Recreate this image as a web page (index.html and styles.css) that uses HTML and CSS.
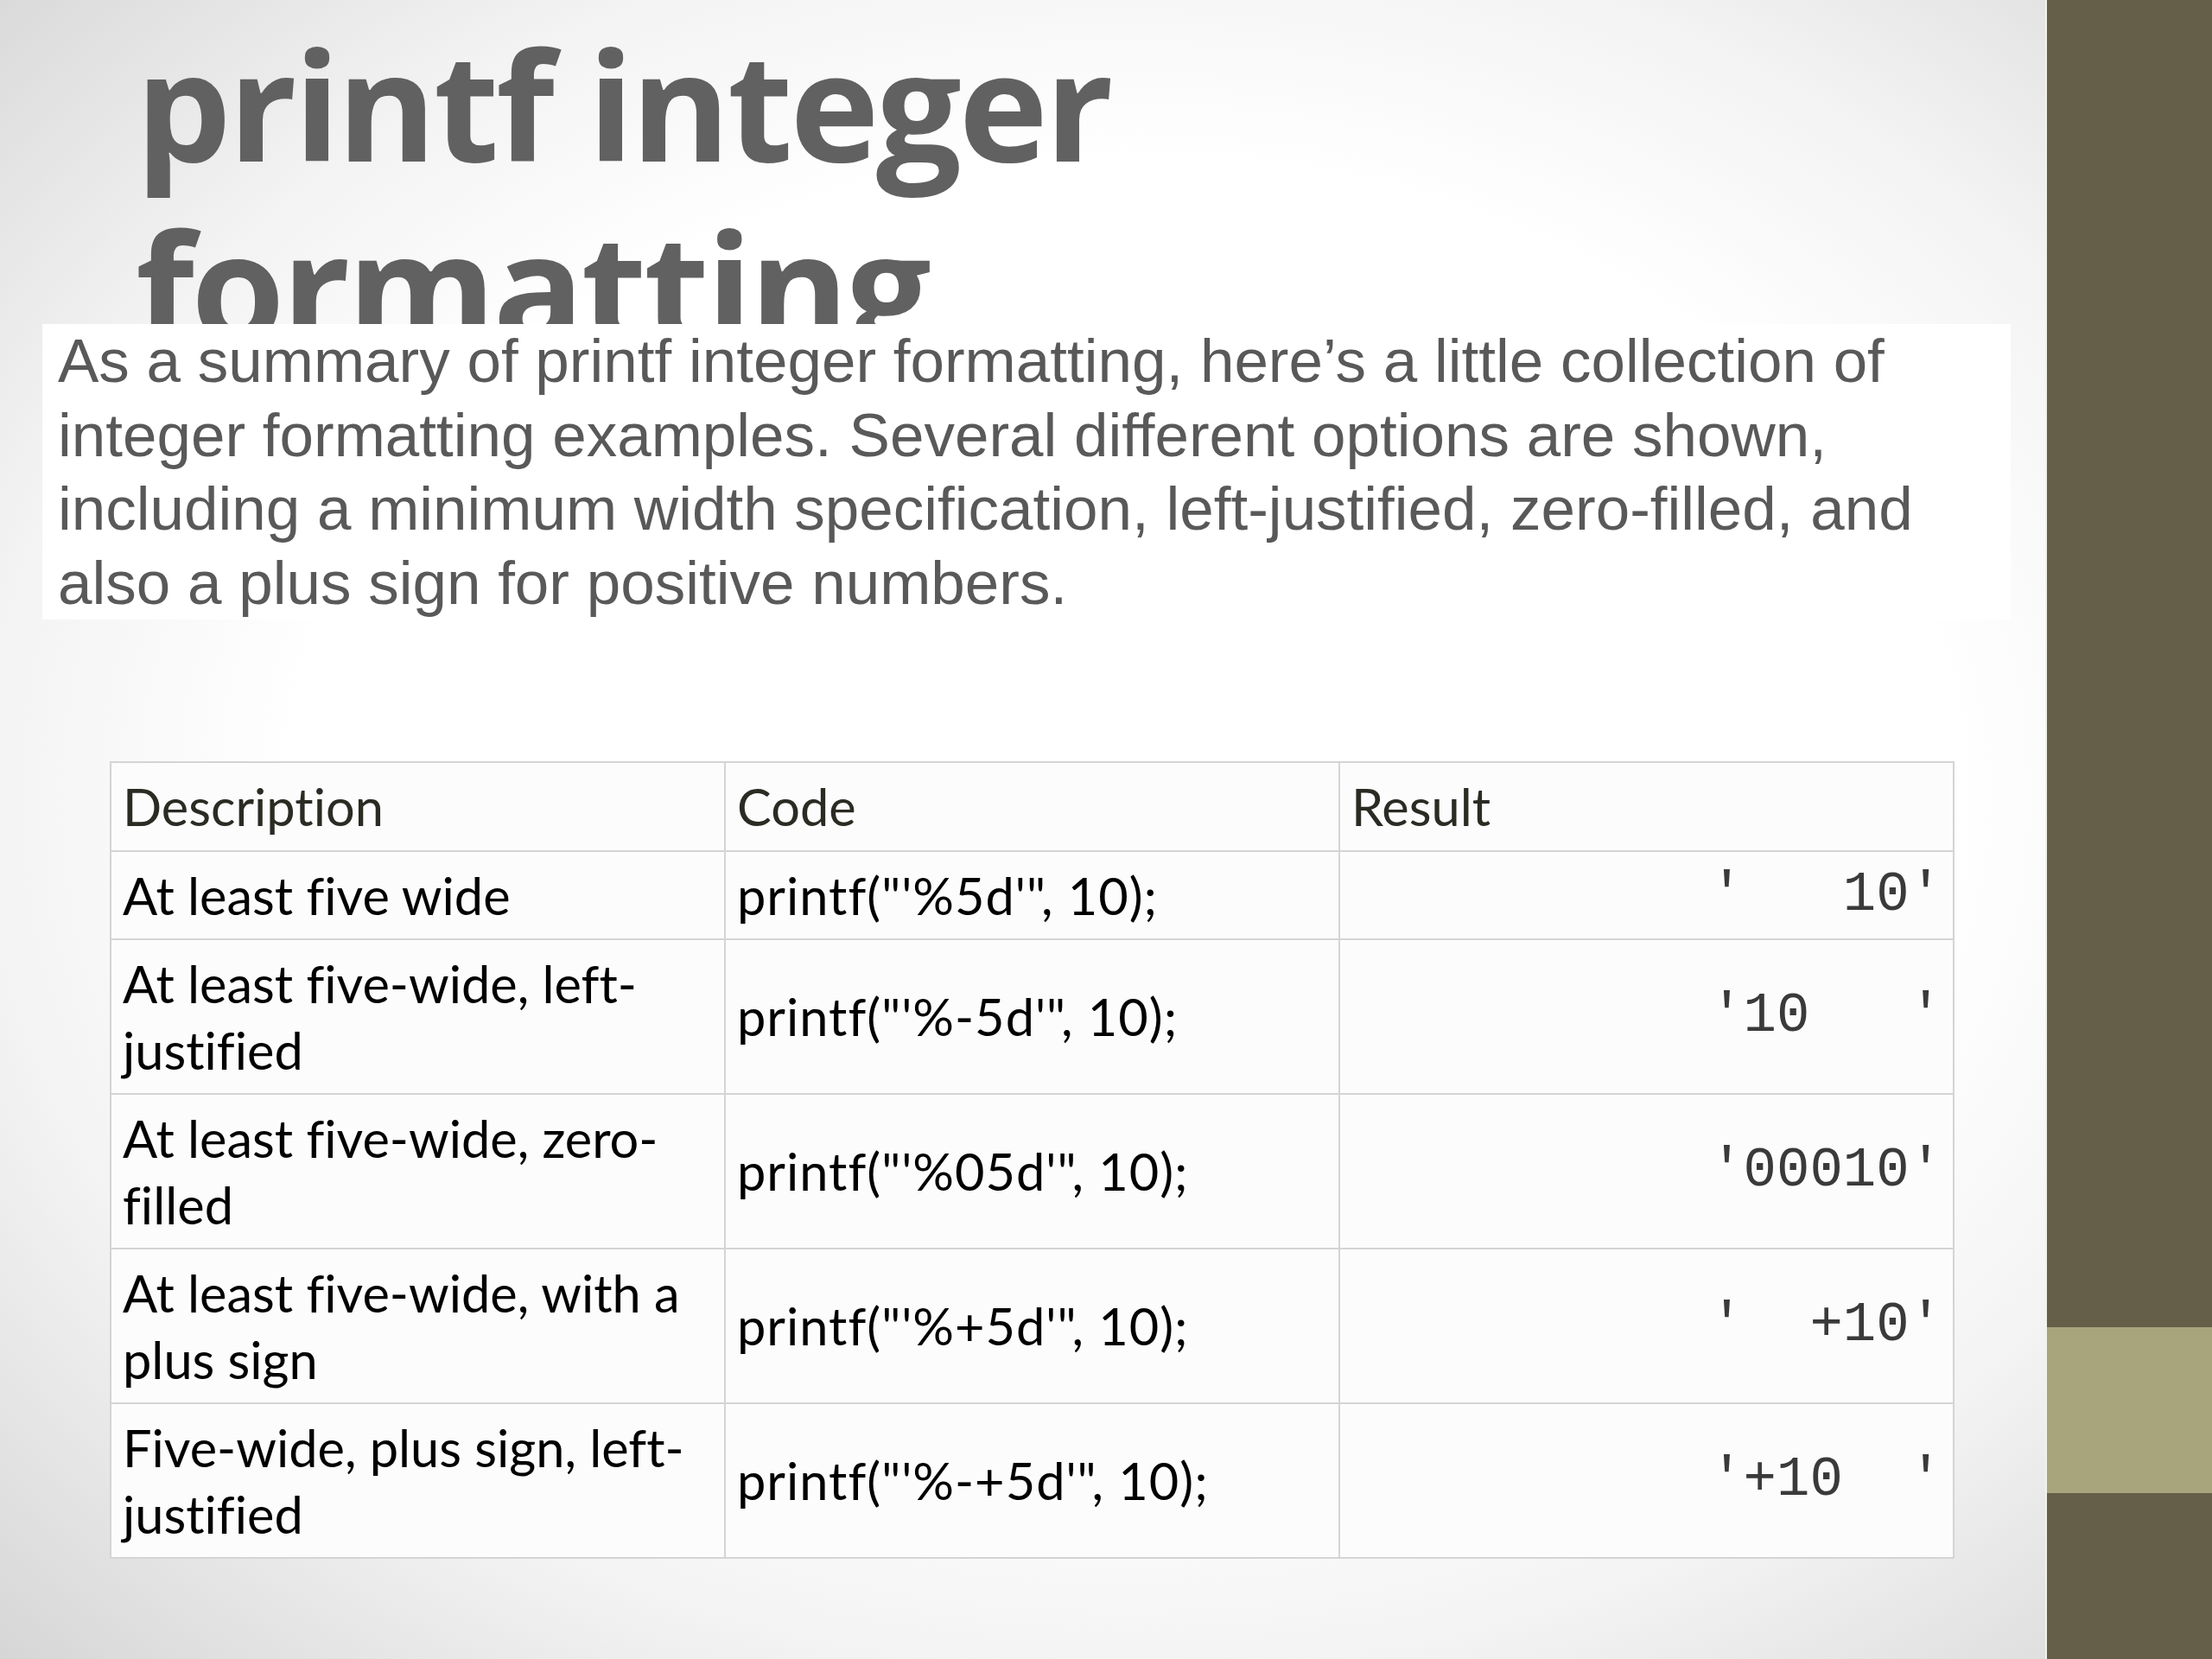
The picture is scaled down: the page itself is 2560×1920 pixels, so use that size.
FILE: index.html
```html
<!DOCTYPE html>
<html lang="en">
<head>
<meta charset="utf-8">
<title>printf integer formatting</title>
<link rel="stylesheet" href="styles.css">
</head>
<body>
<div class="slide">
  <main class="main">
    <div class="title-wrap">
      <h1 class="title">printf integer formatting</h1>
    </div>
    <p class="summary">As a summary of printf integer formatting, here’s a little collection of integer formatting examples. Several different options are shown, including a minimum width specification, left-justified, zero-filled, and also a plus sign for positive numbers.</p>
    <table class="fmt-table">
      <colgroup>
        <col class="c1"><col class="c2"><col class="c3">
      </colgroup>
      <thead>
        <tr><th>Description</th><th>Code</th><th>Result</th></tr>
      </thead>
      <tbody>
        <tr><td>At least five wide</td><td class="code">printf("'%5d'", 10);</td><td class="res">'   10'</td></tr>
        <tr><td>At least five-wide, left-<br>justified</td><td class="code">printf("'%-5d'", 10);</td><td class="res">'10   '</td></tr>
        <tr><td>At least five-wide, zero-<br>filled</td><td class="code">printf("'%05d'", 10);</td><td class="res">'00010'</td></tr>
        <tr><td>At least five-wide, with a<br>plus sign</td><td class="code">printf("'%+5d'", 10);</td><td class="res">'  +10'</td></tr>
        <tr><td>Five-wide, plus sign, left-<br>justified</td><td class="code">printf("'%-+5d'", 10);</td><td class="res">'+10  '</td></tr>
      </tbody>
    </table>
  </main>
  <aside class="sidebar">
    <div class="band"></div>
  </aside>
</div>
</body>
</html>
```

FILE: styles.css
```css
html, body {
  margin: 0;
  padding: 0;
}

body {
  width: 2560px;
  height: 1920px;
  overflow: hidden;
  background: #ffffff;
}

.slide {
  display: flex;
  width: 2560px;
  height: 1920px;
}

.main {
  flex: 1;
  display: flex;
  flex-direction: column;
  align-items: flex-start;
  background: radial-gradient(ellipse farthest-corner at 55% 48%, #ffffff 52%, #f3f3f3 72%, #d6d6d6 100%);
}

.title-wrap {
  margin-top: 14px;
  height: 361px;
  overflow: hidden;
  padding-left: 157px;
}

.title {
  margin: 0;
  font-family: "Open Sans", "DejaVu Sans", sans-serif;
  font-weight: 700;
  font-size: 175px;
  line-height: 210px;
  letter-spacing: -3.5px;
  color: #616161;
  width: 1500px;
}

.summary {
  margin: 0 0 0 49px;
  width: 2260px;
  padding-left: 18px;
  background: #ffffff;
  font-family: "Liberation Sans", Arial, sans-serif;
  font-size: 71px;
  line-height: 85.5px;
  color: #595959;
}

.fmt-table {
  margin: 164px 0 0 127px;
  width: 2135px;
  table-layout: fixed;
  border-collapse: collapse;
  background: #fcfcfc;
  font-family: Lato, "Open Sans", sans-serif;
  font-size: 59.5px;
  line-height: 76.5px;
  font-variant-ligatures: none;
  color: #000000;
}

.fmt-table th,
.fmt-table td {
  border: 2px solid #d4d4d4;
  padding: 12px 10px 12px 13px;
  text-align: left;
  vertical-align: middle;
  font-weight: 400;
}

.fmt-table th {
  color: #2b2b24;
}

.fmt-table td.code {
  letter-spacing: 1px;
}

.fmt-table td.res {
  text-align: right;
  white-space: pre;
  padding-right: 12px;
  font-family: "Liberation Mono", "Courier New", monospace;
  font-size: 64px;
  color: #3a3a3a;
}

.sidebar {
  width: 191px;
  flex: none;
  display: flex;
  flex-direction: column;
  background: #655e48;
  border-left: 2px solid #f4f1ea;
}

.band {
  margin-top: 1536px;
  height: 192px;
  background: #a8a47c;
}
```
